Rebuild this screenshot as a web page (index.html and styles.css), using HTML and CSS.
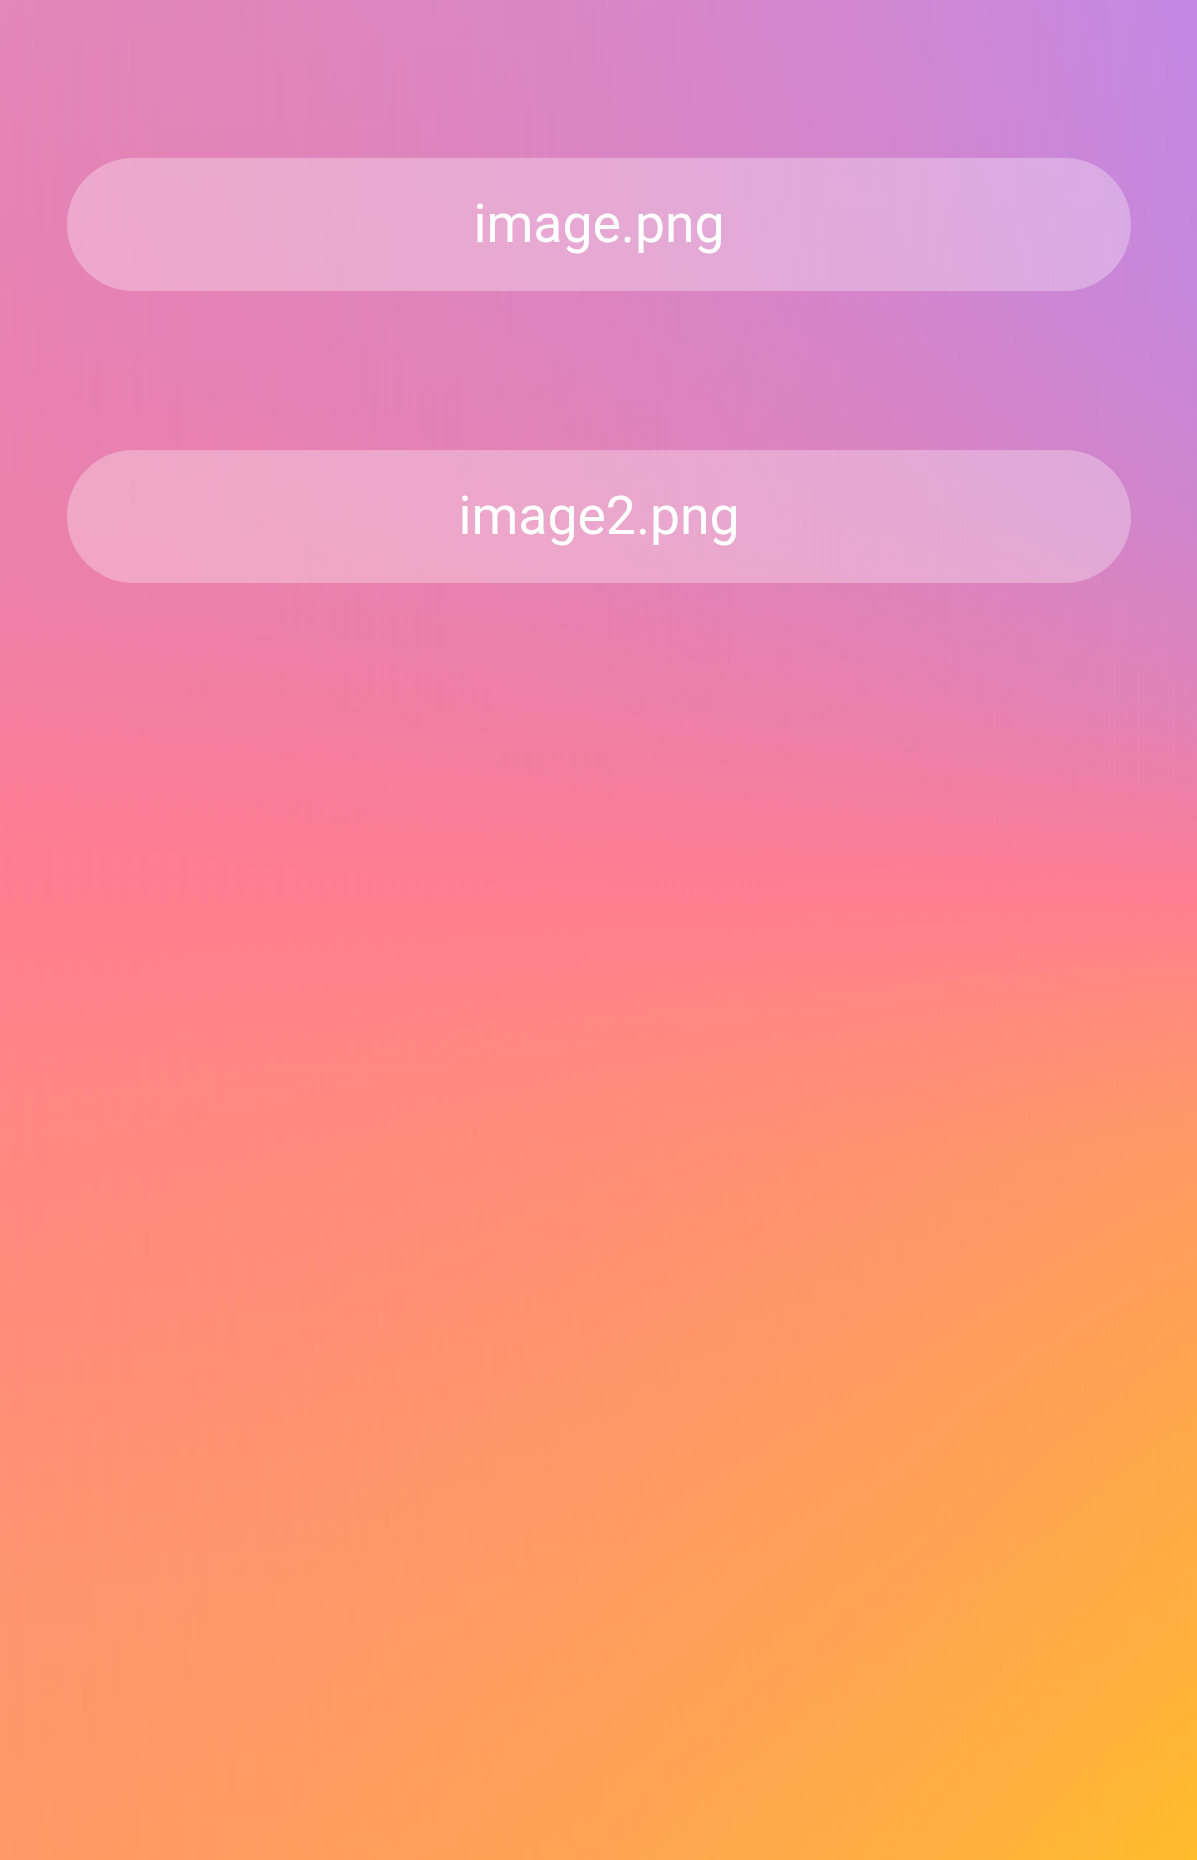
FILE: index.html
```html
<!DOCTYPE html>
<html lang="en">
<head>
<meta charset="utf-8">
<title>Images</title>
<link rel="stylesheet" href="styles.css">
</head>
<body>
<main class="screen">
  <div class="list">
    <div class="pill">image.png</div>
    <div class="pill">image2.png</div>
  </div>
</main>
</body>
</html>
```

FILE: styles.css
```css
html, body {
  margin: 0;
  padding: 0;
}

body {
  font-family: Roboto, "Noto Sans", "Liberation Sans", sans-serif;
}

.screen {
  position: relative;
  min-height: 1860px;
  box-sizing: border-box;
  background: linear-gradient(to bottom,
    #e486b8 0%,
    #e882b2 18%,
    #ee80aa 32%,
    #fa7d98 42%,
    #ff7e90 48%,
    #ff8686 58%,
    #ff8a7f 66%,
    #ff8e78 74%,
    #ff9570 86%,
    #ff9966 100%);
  overflow: hidden;
}

.screen::before {
  content: "";
  position: absolute;
  inset: 0;
  background: linear-gradient(to bottom,
    #c388e4 0%,
    #c687dc 16%,
    #cf85cc 28%,
    #e083b8 38%,
    #f57e9e 45%,
    #ff7e92 48%,
    #ff8c7c 54%,
    #ff9a62 62%,
    #ffa54e 74%,
    #ffb03c 88%,
    #ffbc2b 100%);
  -webkit-mask-image: linear-gradient(to right,
    rgba(0, 0, 0, 0) 0%,
    rgba(0, 0, 0, 0.12) 25%,
    rgba(0, 0, 0, 0.32) 50%,
    rgba(0, 0, 0, 0.6) 75%,
    #000 100%);
  mask-image: linear-gradient(to right,
    rgba(0, 0, 0, 0) 0%,
    rgba(0, 0, 0, 0.12) 25%,
    rgba(0, 0, 0, 0.32) 50%,
    rgba(0, 0, 0, 0.6) 75%,
    #000 100%);
  z-index: 0;
}

.list {
  position: relative;
  z-index: 1;
  display: flex;
  flex-direction: column;
  gap: 159px;
  padding: 158px 66px 0 67px;
}

.pill {
  height: 133px;
  border-radius: 67px;
  background: rgba(255, 255, 255, 0.3);
  color: #ffffff;
  font-size: 53.5px;
  display: flex;
  align-items: center;
  justify-content: center;
  padding-bottom: 3px;
  box-sizing: border-box;
}
```
